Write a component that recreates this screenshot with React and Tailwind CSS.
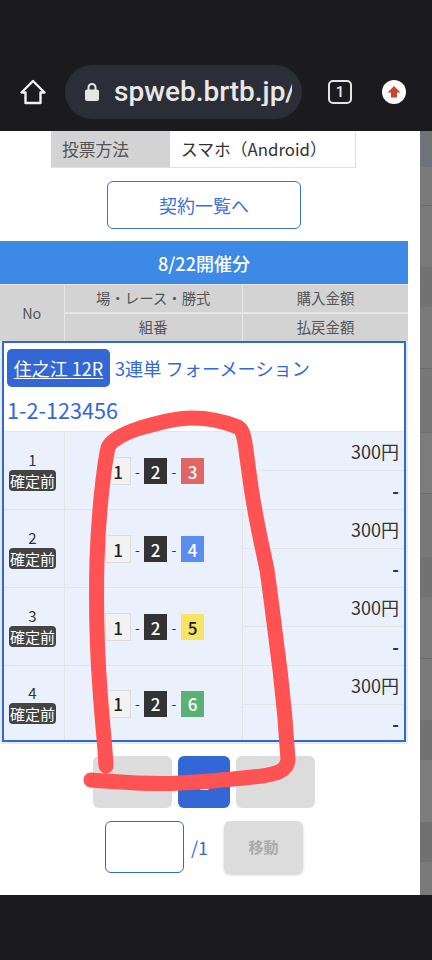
const FONT = "font-['Noto_Sans_CJK_JP','Noto_Sans',sans-serif]"

const BANDS = [
  ['h-[36px]', 'bg-[#70747a]'],
  ['h-[38px]', 'bg-[#7a7a7a]'],
  ['h-[62px]', 'bg-[#7a7a7a] border-t border-[#6c6c6c]'],
  ['h-[40px]', 'bg-[#727272]'],
  ['h-[61px]', 'bg-[#7a7a7a]'],
  ['h-[64px]', 'bg-[#777777] border-t border-[#6c6c6c]'],
  ['h-[61px]', 'bg-[#7c7c7c] border-t border-[#707070]'],
  ['h-[64px]', 'bg-[#787878] border-t border-[#6c6c6c]'],
  ['h-[40px]', 'bg-[#727272]'],
  ['h-[61px]', 'bg-[#7a7a7a]'],
  ['h-[62px]', 'bg-[#7a7a7a] border-t border-[#6c6c6c]'],
  ['h-[40px]', 'bg-[#727272]'],
  ['h-[62px]', 'bg-[#7c7c7c]'],
  ['h-[40px]', 'bg-[#707070]'],
  ['h-[33px]', 'bg-[#7a7a7a]'],
]

const ROWS = [
  { no: 1, third: 3, tone: 'bg-[#e06666] text-white', height: 'h-[78px]' },
  { no: 2, third: 4, tone: 'bg-[#5b8def] text-white', height: 'h-[78px]' },
  { no: 3, third: 5, tone: 'bg-[#f7e463] text-[#222]', height: 'h-[78px]' },
  { no: 4, third: 6, tone: 'bg-[#5bb075] text-white', height: 'h-[75px]' },
]

function Toolbar() {
  return (
    <header className="flex h-[131px] shrink-0 items-start bg-[#1b1b1f] pt-[65px]">
      <div className="flex h-[54px] w-[65px] items-center justify-center">
        <svg width="28" height="28" viewBox="0 0 28 28" fill="none" stroke="#f1f1f1" strokeWidth="2.4" strokeLinejoin="round">
          <path d="M14 3 L2.5 14.5 H6.5 V25 H21.5 V14.5 H25.5 Z" />
        </svg>
      </div>
      <div className="flex h-[54px] w-[237px] items-center overflow-hidden rounded-[27px] bg-[#2c2e37] pl-[19px]">
        <svg width="16" height="20" viewBox="0 0 16 20" className="shrink-0" fill="#e6e6e6">
          <path d="M3.5 8 V5.5 a4.5 4.5 0 0 1 9 0 V8 h-2 V5.5 a2.5 2.5 0 0 0 -5 0 V8 Z" />
          <rect x="1" y="7.5" width="14" height="11.5" rx="2" />
        </svg>
        <div className="ml-[14px] w-[178px] overflow-hidden whitespace-nowrap font-['Roboto',sans-serif] text-[28px] font-medium leading-none text-[#e8e8e8]">
          spweb.brtb.jp/
        </div>
      </div>
      <div className="ml-[26px] flex h-[54px] items-center">
        <div className="flex h-[24px] w-[24px] items-center justify-center rounded-[5px] border-2 border-[#e4e4e4] font-['Roboto',sans-serif] text-[15px] font-medium text-[#e8e8e8]">
          1
        </div>
      </div>
      <div className="ml-[30px] flex h-[54px] items-center">
        <div className="flex h-[24px] w-[24px] items-center justify-center rounded-full bg-white">
          <svg width="14" height="12" viewBox="0 0 14 12" fill="#c8452f">
            <path d="M7 0 L13.5 6.5 H10 V11.5 H4 V6.5 H0.5 Z" />
          </svg>
        </div>
      </div>
    </header>
  )
}

function NumBox({ className, children }) {
  return (
    <span className={`flex h-[26px] w-[23px] items-center justify-center text-[17px] font-medium leading-none ${className}`}>
      {children}
    </span>
  )
}

function BetRow({ row }) {
  return (
    <div className={`grid grid-cols-[61px_178px_1fr] border-t border-[#e2e5ea] bg-[#eaf1fd] ${row.height}`}>
      <div className="flex flex-col items-center justify-center border-r border-[#e2e5ea] pr-[3px] text-[#333]">
        <span className="text-[15px] leading-[20px]">{row.no}</span>
        <span className="h-[21px] w-[47px] rounded-[4px] bg-[#444] text-center text-[15px] leading-[21px] text-white">確定前</span>
      </div>
      <div className="flex items-center border-r border-[#e2e5ea] pl-[40px] pt-[1px]">
        <span className="flex h-[28px] w-[26px] items-center justify-center border border-[#dcdcdc] bg-[#f2f2f2] text-[17px] font-medium leading-none text-[#222]">1</span>
        <span className="w-[13px] text-center text-[14px] text-[#333]">-</span>
        <NumBox className="bg-[#333] text-white">2</NumBox>
        <span className="w-[14px] text-center text-[14px] text-[#333]">-</span>
        <NumBox className={row.tone}>{row.third}</NumBox>
      </div>
      <div className="flex flex-col">
        <div className="flex h-[39px] items-center justify-end border-b border-[#e2e5ea] pr-[5px] text-[18px] leading-none text-[#333]">300円</div>
        <div className="flex flex-1 items-center justify-end pr-[5px] text-[18px] font-bold leading-none text-[#333]">-</div>
      </div>
    </div>
  )
}

function Results() {
  return (
    <section className="mt-[12px] w-[408px]">
      <h2 className="flex h-[43px] items-center justify-center bg-[#3d89e6] text-[18px] font-medium leading-none text-white">8/22開催分</h2>
      <div className="grid h-[57px] grid-cols-[63.5px_176.5px_1fr] grid-rows-2 gap-[1.5px] border-t border-[#e6e6e6] bg-[#e6e6e6] text-[14.4px] leading-none text-[#555]">
        <div className="row-span-2 flex items-center justify-center bg-[#d3d3d3]">No</div>
        <div className="flex items-center justify-center bg-[#d3d3d3]">場・レース・勝式</div>
        <div className="flex items-center justify-center bg-[#d3d3d3]">購入金額</div>
        <div className="flex items-center justify-center bg-[#d3d3d3]">組番</div>
        <div className="flex items-center justify-center bg-[#d3d3d3]">払戻金額</div>
      </div>
      <div className="bg-[#e6eaf2] px-[2px] pb-[2px]">
        <div className="border-2 border-[#3367d6] bg-white">
          <div className="h-[88px] pl-[3px] pt-[6px] text-[#3367d6]">
            <div className="flex h-[38px] items-center">
              <a className="flex h-[38px] w-[103px] items-center justify-center rounded-[5px] bg-[#3367d6] text-[18px] leading-none text-white underline underline-offset-2">住之江 12R</a>
              <span className="ml-[5px] whitespace-nowrap text-[18.2px] leading-none">3連単 フォーメーション</span>
            </div>
            <div className="mt-[9px] text-[21.6px] leading-[28px]">1-2-123456</div>
          </div>
          {ROWS.map((row) => <BetRow key={row.no} row={row} />)}
        </div>
      </div>
    </section>
  )
}

function Pager() {
  return (
    <>
      <div className="mt-[12px] flex w-[408px] justify-center gap-[6px]">
        <div className="h-[52px] w-[79px] rounded-[6px] bg-[#dcdcdc]" />
        <div className="flex h-[52px] w-[52px] items-center justify-center rounded-[6px] bg-[#3367d6] text-[18px] font-bold text-white">1</div>
        <div className="h-[52px] w-[79px] rounded-[6px] bg-[#dcdcdc]" />
      </div>
      <div className="mt-[13px] flex w-[408px] items-center pl-[105px]">
        <div className="h-[52px] w-[79px] rounded-[6px] border border-[#3367d6] bg-white" />
        <span className="ml-[7px] w-[33px] text-[18px] leading-none text-[#3367d6]">/1</span>
        <div className="flex h-[52px] w-[79px] items-center justify-center rounded-[6px] bg-[#dcdcdc] text-[15px] font-bold text-[#aaa] shadow-[0_2px_3px_rgba(0,0,0,0.18)]">移動</div>
      </div>
    </>
  )
}

function Scribble() {
  return (
    <svg className="pointer-events-none absolute left-0 top-0" width="432" height="960" viewBox="0 0 432 960" fill="none">
      <path
        d="M106 766 C105 745 102 720 100 690 C97 650 96 600 97 560 C98 530 100 505 103 480 C105 465 106 455 108 448 C110 440 125 433 140 428 C158 423 175 418 192 418 C210 418 228 423 238 427 C245 431 245 445 248 465 C250 480 252 495 254 505 C258 530 263 550 267 570 C272 605 276 640 280 670 C283 695 286 725 288 760 C287 771 276 774 262 776 C235 779 205 782 180 783 C150 785 120 782 91 780"
        stroke="#ff5252"
        strokeWidth="15"
        strokeLinecap="round"
        strokeLinejoin="round"
      />
    </svg>
  )
}

export default function App() {
  return (
    <div className={`relative flex h-[960px] w-[432px] flex-col overflow-hidden bg-[#1b1b1f] ${FONT}`}>
      <Toolbar />
      <div className="flex h-[764px] shrink-0">
        <main className="w-[420px] bg-white">
          <div className="ml-[51px] grid h-[37px] w-[305px] grid-cols-[119px_1fr] border-b border-r border-[#e0e0e0]">
            <div className="flex items-center bg-[#d3d3d3] pl-[11px] text-[16.8px] leading-none text-[#555]">投票方法</div>
            <div className="flex items-center pl-[11px] text-[16.8px] leading-none text-[#333]">スマホ（Android）</div>
          </div>
          <div className="mt-[13px] flex w-[408px] justify-center">
            <button type="button" className="h-[48px] w-[194px] rounded-[6px] border border-[#3a72dc] bg-white text-[18px] leading-none text-[#3a72dc]">契約一覧へ</button>
          </div>
          <Results />
          <Pager />
        </main>
        <aside className="flex w-[12px] flex-col">
          {BANDS.map(([height, tone], i) => <div key={i} className={`${height} ${tone}`} />)}
        </aside>
      </div>
      <div className="flex-1 bg-[#1b1b1f]" />
      <Scribble />
    </div>
  )
}
